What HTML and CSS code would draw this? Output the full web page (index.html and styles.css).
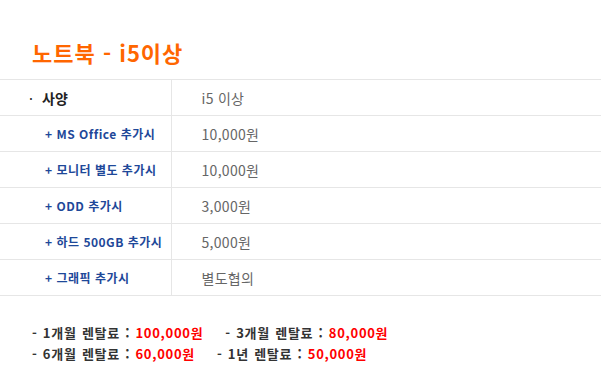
FILE: index.html
```html
<!DOCTYPE html>
<html lang="ko">
<head>
<meta charset="utf-8">
<link rel="stylesheet" href="styles.css">
</head>
<body>
<div class="page">
  <h1 class="title">노트북 - i5이상</h1>
  <table class="spec">
    <tr class="main">
      <th><span class="dot">·</span>사양</th>
      <td>i5 이상</td>
    </tr>
    <tr class="sub">
      <th>+ MS Office 추가시</th>
      <td>10,000원</td>
    </tr>
    <tr class="sub">
      <th>+ 모니터 별도 추가시</th>
      <td>10,000원</td>
    </tr>
    <tr class="sub">
      <th>+ ODD 추가시</th>
      <td>3,000원</td>
    </tr>
    <tr class="sub">
      <th>+ 하드 500GB 추가시</th>
      <td>5,000원</td>
    </tr>
    <tr class="sub">
      <th>+ 그래픽 추가시</th>
      <td>별도협의</td>
    </tr>
  </table>
  <div class="rent">
    <p>- 1개월 렌탈료 : <span class="price">100,000원</span><span class="gap">- 3개월 렌탈료 : <span class="price">80,000원</span></span></p>
    <p>- 6개월 렌탈료 : <span class="price">60,000원</span><span class="gap">- 1년 렌탈료 : <span class="price">50,000원</span></span></p>
  </div>
</div>
</body>
</html>
```
FILE: styles.css
```css
html, body {
  margin: 0;
  padding: 0;
  background: #fff;
}
body {
  font-family: "Noto Sans CJK KR", "Noto Sans", sans-serif;
}
.page {
  width: 601px;
  padding-top: 37px;
}
.title {
  margin: 0 0 11px 32px;
  font-size: 22px;
  line-height: 31px;
  font-weight: bold;
  letter-spacing: 1px;
  color: #ff6600;
}
.spec {
  width: 601px;
  border-collapse: collapse;
  table-layout: fixed;
  border-top: 1px solid #e6e6e6;
}
.spec tr {
  border-bottom: 1px solid #e6e6e6;
}
.spec th, .spec td {
  box-sizing: border-box;
  height: 36px;
  padding: 0;
  vertical-align: middle;
  text-align: left;
}
.spec th {
  width: 171px;
  border-right: 1px solid #e6e6e6;
}
.spec td {
  padding-left: 30px;
  font-size: 14px;
  letter-spacing: 0.3px;
  color: #666;
}
.main th {
  padding-left: 29px;
  font-size: 14px;
  font-weight: bold;
  color: #222;
}
.dot {
  display: inline-block;
  width: 13px;
  font-weight: normal;
}
.sub th {
  padding-left: 45px;
  font-size: 12px;
  font-weight: bold;
  letter-spacing: 0.5px;
  color: #1e4899;
}
.rent {
  padding: 26px 0 0 32px;
}
.rent p {
  margin: 0;
  font-size: 13px;
  line-height: 21px;
  font-weight: bold;
  letter-spacing: 0.7px;
  word-spacing: 1px;
  color: #333;
}
.price {
  color: #ff0000;
}
.gap {
  margin-left: 22px;
}
```
